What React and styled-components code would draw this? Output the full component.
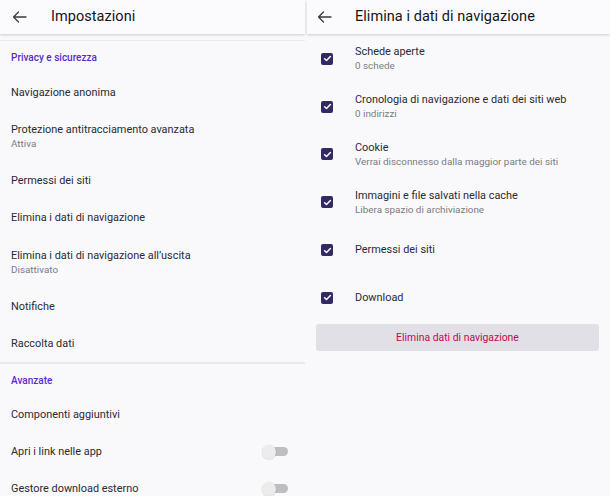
import React from "react";
import styled, { createGlobalStyle } from "styled-components";

const Global = createGlobalStyle`
  html, body { margin: 0; padding: 0; }
  body {
    background: #f9f9fb;
    font-family: Roboto, "Noto Sans", Arial, sans-serif;
    color: #15141a;
    width: 610px;
    height: 496px;
    overflow: hidden;
  }
`;

const Screen = styled.div`
  display: flex;
  gap: 2px;
  width: 610px;
  height: 496px;
  overflow: hidden;
`;

const Pane = styled.div`
  width: ${(p) => p.$w}px;
  flex: none;
  display: flex;
  flex-direction: column;
  background: #f9f9fb;
  & > * { flex: none; }
`;

const Header = styled.div`
  height: 34px;
  display: flex;
  align-items: center;
  background: #fbfbfe;
  box-shadow: 0 1px 2px rgba(0, 0, 0, 0.12), 0 2px 3px rgba(0, 0, 0, 0.05);
  position: relative;
  z-index: 1;
`;

const BackBtn = styled.div`
  width: ${(p) => p.$w}px;
  padding-left: ${(p) => p.$pl}px;
  display: flex;
  align-items: center;
  color: #3a3944;
  box-sizing: border-box;
`;

const Title = styled.div`
  font-size: 14.5px;
  color: #15141a;
  letter-spacing: 0.05px;
  margin-top: -1px;
`;

const Divider = styled.div`
  height: ${(p) => p.$h || 2}px;
  background: #e9e9ee;
  margin-top: ${(p) => p.$mt || 0}px;
`;

const SectionTitle = styled.div`
  height: ${(p) => p.$h}px;
  display: flex;
  align-items: center;
  padding-left: 11px;
  font-size: 10px;
  font-weight: 500;
  color: #592acb;
`;

const Row = styled.div`
  height: ${(p) => (p.$two ? 51.5 : 37)}px;
  display: flex;
  align-items: center;
  justify-content: space-between;
  padding: 0 17px 0 11px;
`;

const TextCol = styled.div`
  display: flex;
  flex-direction: column;
  justify-content: center;
`;

const Primary = styled.div`
  font-size: 10.9px;
  line-height: 14px;
  color: #2b2a33;
`;

const Secondary = styled.div`
  font-size: 9.9px;
  line-height: 12px;
  color: #7c7a85;
  margin-top: 1px;
`;

const Toggle = styled.div`
  position: relative;
  width: 26px;
  height: 14px;
  display: flex;
  align-items: center;
  justify-content: flex-end;
`;

const Track = styled.div`
  width: 17px;
  height: 9px;
  border-radius: 5px;
  background: #bdbdc2;
`;

const Thumb = styled.div`
  position: absolute;
  left: 0;
  top: 0;
  width: 14px;
  height: 14px;
  border-radius: 50%;
  background: #ececec;
  box-shadow: 0 0.5px 1.5px rgba(0, 0, 0, 0.18);
`;

const List = styled.div`
  display: flex;
  flex-direction: column;
  padding-top: 1px;
`;

const CheckRow = styled.div`
  height: 47.8px;
  display: flex;
  align-items: center;
`;

const CheckCell = styled.div`
  width: 48px;
  padding-left: 14px;
  box-sizing: border-box;
  display: flex;
  align-items: center;
`;

const Box = styled.div`
  width: 12px;
  height: 12px;
  border-radius: 2px;
  background: #312a64;
  display: flex;
  align-items: center;
  justify-content: center;
`;

const ButtonWrap = styled.div`
  padding: 2px 11px 0 9px;
`;

const Button = styled.div`
  height: 27px;
  border-radius: 3px;
  background: #e0e0e6;
  display: flex;
  align-items: center;
  justify-content: center;
  font-size: 10.4px;
  color: #c5084a;
`;

const Arrow = () => (
  <svg width="15" height="12" viewBox="0 0 15 12" fill="none">
    <path
      d="M14 6H1.5M6.5 1L1.5 6L6.5 11"
      stroke="currentColor"
      strokeWidth="1.3"
      strokeLinecap="round"
      strokeLinejoin="round"
    />
  </svg>
);

const Check = () => (
  <svg width="9" height="9" viewBox="0 0 9 9" fill="none">
    <path
      d="M1.6 4.7L3.5 6.5L7.4 2.5"
      stroke="#fff"
      strokeWidth="1.5"
      strokeLinecap="round"
      strokeLinejoin="round"
    />
  </svg>
);

const SwitchOff = () => (
  <Toggle>
    <Track />
    <Thumb />
  </Toggle>
);

const Item = ({ title, sub, toggle }) => (
  <Row $two={!!sub}>
    <TextCol>
      <Primary>{title}</Primary>
      {sub && <Secondary>{sub}</Secondary>}
    </TextCol>
    {toggle && <SwitchOff />}
  </Row>
);

const CheckItem = ({ title, sub }) => (
  <CheckRow>
    <CheckCell>
      <Box>
        <Check />
      </Box>
    </CheckCell>
    <TextCol>
      <Primary>{title}</Primary>
      {sub && <Secondary>{sub}</Secondary>}
    </TextCol>
  </CheckRow>
);

export default function App() {
  return (
    <>
      <Global />
      <Screen>
        <Pane $w={305}>
          <Header>
            <BackBtn $w={51} $pl={12}>
              <Arrow />
            </BackBtn>
            <Title>Impostazioni</Title>
          </Header>
          <Divider $mt={6} $h={1} />
          <SectionTitle $h={33}>Privacy e sicurezza</SectionTitle>
          <Item title="Navigazione anonima" />
          <Item title="Protezione antitracciamento avanzata" sub="Attiva" />
          <Item title="Permessi dei siti" />
          <Item title="Elimina i dati di navigazione" />
          <Item title="Elimina i dati di navigazione all’uscita" sub="Disattivato" />
          <Item title="Notifiche" />
          <Item title="Raccolta dati" />
          <Divider $h={2} />
          <SectionTitle $h={32}>Avanzate</SectionTitle>
          <Item title="Componenti aggiuntivi" />
          <Item title="Apri i link nelle app" toggle />
          <Item title="Gestore download esterno" toggle />
        </Pane>
        <Pane $w={303}>
          <Header>
            <BackBtn $w={48} $pl={10}>
              <Arrow />
            </BackBtn>
            <Title>Elimina i dati di navigazione</Title>
          </Header>
          <List>
            <CheckItem title="Schede aperte" sub="0 schede" />
            <CheckItem
              title="Cronologia di navigazione e dati dei siti web"
              sub="0 indirizzi"
            />
            <CheckItem
              title="Cookie"
              sub="Verrai disconnesso dalla maggior parte dei siti"
            />
            <CheckItem
              title="Immagini e file salvati nella cache"
              sub="Libera spazio di archiviazione"
            />
            <CheckItem title="Permessi dei siti" />
            <CheckItem title="Download" />
          </List>
          <ButtonWrap>
            <Button>Elimina dati di navigazione</Button>
          </ButtonWrap>
        </Pane>
      </Screen>
    </>
  );
}
